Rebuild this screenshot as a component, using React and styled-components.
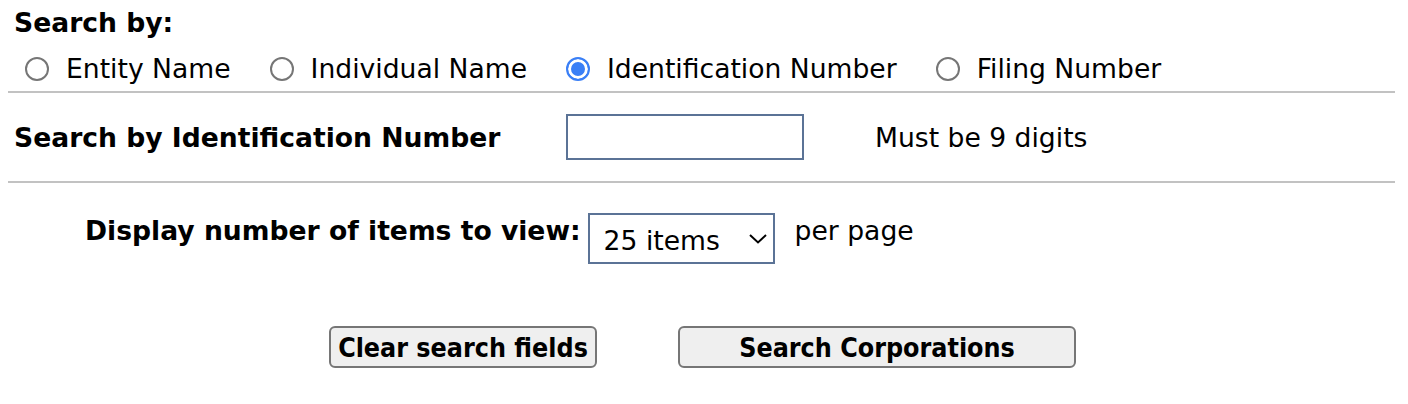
import React, { useState } from "react";
import styled, { createGlobalStyle } from "styled-components";

const Global = createGlobalStyle`
  body {
    margin: 8px;
    font-family: "DejaVu Sans", Verdana, sans-serif;
    font-size: 26.6px;
    color: #000;
    background: #fff;
  }
`;

const Form = styled.form`
  display: flex;
  flex-direction: column;
  width: 1387px;
`;

const Heading = styled.div`
  font-weight: bold;
  line-height: 30px;
  height: 30px;
  padding-left: 6px;
`;

const RadioRow = styled.div`
  display: flex;
  align-items: center;
  gap: 39px;
  margin-top: 16px;
  padding-left: 17px;
  height: 30px;
`;

const Option = styled.label`
  display: flex;
  align-items: center;
  gap: 17px;
  line-height: 30px;
  cursor: pointer;
`;

const RadioInput = styled.input.attrs({ type: "radio" })`
  appearance: none;
  margin: 0;
  width: 24px;
  height: 24px;
  border-radius: 50%;
  border: 2px solid #767676;
  box-sizing: border-box;
  background: #fff;
  &:checked {
    border-color: #3a7ff6;
    box-shadow: inset 0 0 0 3px #fff;
    background: #3a7ff6;
  }
`;

const Rule = styled.hr`
  margin: 0;
  border: none;
  height: 2px;
  background: #c2c2c2;
  margin-top: ${(p) => p.$top || 0}px;
`;

const IdRow = styled.div`
  display: grid;
  grid-template-columns: 552px 238px auto;
  align-items: center;
  padding-left: 6px;
  height: 88px;
`;

const BoldLabel = styled.span`
  font-weight: bold;
  line-height: 30px;
  margin-top: 2px;
`;

const TextBox = styled.input`
  box-sizing: border-box;
  width: 238px;
  height: 46px;
  border: 2px solid #5b7396;
  margin: 0;
  padding: 0 6px;
  font: inherit;
`;

const Hint = styled.span`
  line-height: 30px;
  padding-left: 71px;
  margin-top: 2px;
`;

const PerPageRow = styled.div`
  display: flex;
  align-items: flex-start;
  margin-top: 30px;
  padding-left: 77px;
  height: 51px;
`;

const PerPageLabel = styled.span`
  font-weight: bold;
  line-height: 30px;
  margin-top: 3px;
  margin-right: 7px;
`;

const SelectWrap = styled.div`
  position: relative;
  width: 187px;
  height: 51px;
`;

const Select = styled.select`
  appearance: none;
  box-sizing: border-box;
  width: 187px;
  height: 51px;
  margin: 0;
  border: 2px solid #5b7396;
  border-radius: 0;
  background: #fff;
  font: inherit;
  color: #000;
  padding: 4px 0 0 14px;
`;

const Chevron = styled.svg`
  position: absolute;
  right: 8px;
  top: 21px;
  pointer-events: none;
`;

const After = styled.span`
  line-height: 30px;
  margin-top: 3px;
  margin-left: 20px;
`;

const ButtonRow = styled.div`
  display: flex;
  gap: 81px;
  margin-top: 62px;
  padding-left: 321px;
`;

const Button = styled.button`
  box-sizing: border-box;
  height: 42px;
  width: ${(p) => p.$width}px;
  margin: 0;
  padding: 2px 0 0;
  border: 2px solid #767676;
  border-radius: 6px;
  background: #efefef;
  font-family: "DejaVu Sans Condensed", "DejaVu Sans", sans-serif;
  font-stretch: condensed;
  font-size: 26.6px;
  font-weight: bold;
  line-height: 36px;
  white-space: nowrap;
  color: #000;
`;

const options = [
  { id: "entity", label: "Entity Name" },
  { id: "individual", label: "Individual Name" },
  { id: "ident", label: "Identification Number" },
  { id: "filing", label: "Filing Number" },
];

export default function App() {
  const [mode, setMode] = useState("ident");
  return (
    <>
      <Global />
      <Form onSubmit={(e) => e.preventDefault()}>
        <Heading>Search by:</Heading>
        <RadioRow>
          {options.map((o) => (
            <Option key={o.id}>
              <RadioInput
                name="searchBy"
                checked={mode === o.id}
                onChange={() => setMode(o.id)}
              />
              {o.label}
            </Option>
          ))}
        </RadioRow>
        <Rule $top={7} />
        <IdRow>
          <BoldLabel>Search by Identification Number</BoldLabel>
          <TextBox type="text" maxLength={9} />
          <Hint>Must be 9 digits</Hint>
        </IdRow>
        <Rule />
        <PerPageRow>
          <PerPageLabel>Display number of items to view:</PerPageLabel>
          <SelectWrap>
            <Select defaultValue="25">
              <option value="10">10 items</option>
              <option value="25">25 items</option>
              <option value="50">50 items</option>
              <option value="100">100 items</option>
            </Select>
            <Chevron width="18" height="10" viewBox="0 0 18 10">
              <path d="M1 1 L9 8.5 L17 1" fill="none" stroke="#000" strokeWidth="2" />
            </Chevron>
          </SelectWrap>
          <After>per page</After>
        </PerPageRow>
        <ButtonRow>
          <Button type="reset" $width={268}>Clear search fields</Button>
          <Button type="submit" $width={398}>Search Corporations</Button>
        </ButtonRow>
      </Form>
    </>
  );
}
